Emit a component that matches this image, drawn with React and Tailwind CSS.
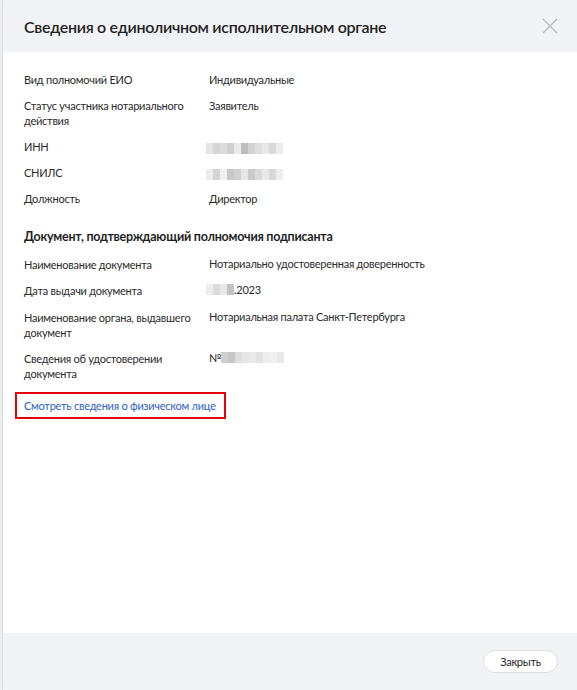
import React from 'react';

const font = { fontFamily: 'Lato, "Noto Sans", "Liberation Sans", sans-serif' };

const Blur = ({ cells, className = '' }) => (
  <span className={`inline-flex h-[11px] items-stretch align-middle ${className}`}>
    {cells.map((c, i) => (
      <span key={i} className={`${c} w-[7px]`} />
    ))}
  </span>
);

const Row = ({ label, children }) => (
  <div className="flex">
    <div className="w-[185px] shrink-0 pr-3 text-[#2b2b2b]">{label}</div>
    <div className="text-[#2b2b2b]">{children}</div>
  </div>
);

export default function App() {
  return (
    <div className="flex h-[690px] w-[577px] bg-[#eef0f3] text-[11px] leading-[15px] tracking-[-0.25px]" style={font}>
      <div className="w-[3px] shrink-0 border-r border-[#e2e4e8] bg-[#f1f2f5]" />
      <div className="flex flex-1 flex-col bg-white shadow-[-2px_0_4px_rgba(0,0,0,0.04)]">
        <div className="flex h-[52px] items-center justify-between bg-[#f2f3f6] pl-[21px] pr-[18px]">
          <h1 className="text-[16px] font-semibold tracking-[-0.3px] text-[#1f1f1f]">Сведения о единоличном исполнительном органе</h1>
          <svg width="18" height="18" viewBox="0 0 18 18" className="text-[#b5b7bb]">
            <path d="M2 2 L16 16 M16 2 L2 16" stroke="currentColor" strokeWidth="1.2" />
          </svg>
        </div>

        <div className="flex flex-1 flex-col pl-[21px] pr-6 pt-[20px]">
          <div className="flex flex-col gap-[11px]">
            <Row label="Вид полномочий ЕИО">Индивидуальные</Row>
            <Row label="Статус участника нотариального действия">Заявитель</Row>
            <Row label="ИНН">
              <Blur cells={['bg-[#e4e4e4]', 'bg-[#d6d6d6]', 'bg-[#dcdcdc]', 'bg-[#cfcfcf]', 'bg-[#ebebeb]', 'bg-[#bdbdbd]', 'bg-[#d3d3d3]', 'bg-[#dedede]', 'bg-[#e8e8e8]', 'bg-[#d9d9d9]', 'bg-[#ececec]']} className="-ml-[3px]" />
            </Row>
            <Row label="СНИЛС">
              <Blur cells={['bg-[#ececec]', 'bg-[#d4d4d4]', 'bg-[#f1f1f1]', 'bg-[#c8c8c8]', 'bg-[#d0d0d0]', 'bg-[#e6e6e6]', 'bg-[#c9c9c9]', 'bg-[#dadada]', 'bg-[#e9e9e9]', 'bg-[#d8d8d8]', 'bg-[#eeeeee]']} className="-ml-[3px]" />
            </Row>
            <Row label="Должность">Директор</Row>
          </div>

          <h2 className="mt-[23px] text-[12.5px] font-bold text-[#1f1f1f]">Документ, подтверждающий полномочия подписанта</h2>

          <div className="mt-[13px] flex flex-col gap-[11px]">
            <Row label="Наименование документа">
              <span className="relative -top-px">Нотариально удостоверенная доверенность</span>
            </Row>
            <Row label="Дата выдачи документа">
              <span className="relative -top-px inline-flex items-center">
                <Blur cells={['bg-[#eeeeee]', 'bg-[#dcdcdc]', 'bg-[#e8e8e8]', 'bg-[#c4c4c4]']} className="-ml-[3px]" />
                .2023
              </span>
            </Row>
            <Row label="Наименование органа, выдавшего документ">
              <span className="relative -top-px">Нотариальная палата Санкт-Петербурга</span>
            </Row>
            <Row label="Сведения об удостоверении документа">
              <span className="relative -top-px inline-flex items-center">
                №
                <Blur cells={['bg-[#cfcfcf]', 'bg-[#c7c7c7]', 'bg-[#dedede]', 'bg-[#e6e6e6]', 'bg-[#eaeaea]', 'bg-[#e2e2e2]', 'bg-[#eeeeee]', 'bg-[#f0f0f0]', 'bg-[#e9e9e9]']} />
              </span>
            </Row>
          </div>

          <div className="mt-[11px] -ml-[9px] w-[211px] border-2 border-[#e8000b] px-[7px] py-[4px]">
            <a className="whitespace-nowrap text-[#2f5fc6]">Смотреть сведения о физическом лице</a>
          </div>
        </div>

        <div className="flex h-[57px] items-center justify-end bg-[#f2f3f6] pr-[19px]">
          <button className="h-[23px] w-[75px] rounded-full border border-[#dcdee2] bg-white text-[11px] text-[#222]">Закрыть</button>
        </div>
      </div>
    </div>
  );
}
